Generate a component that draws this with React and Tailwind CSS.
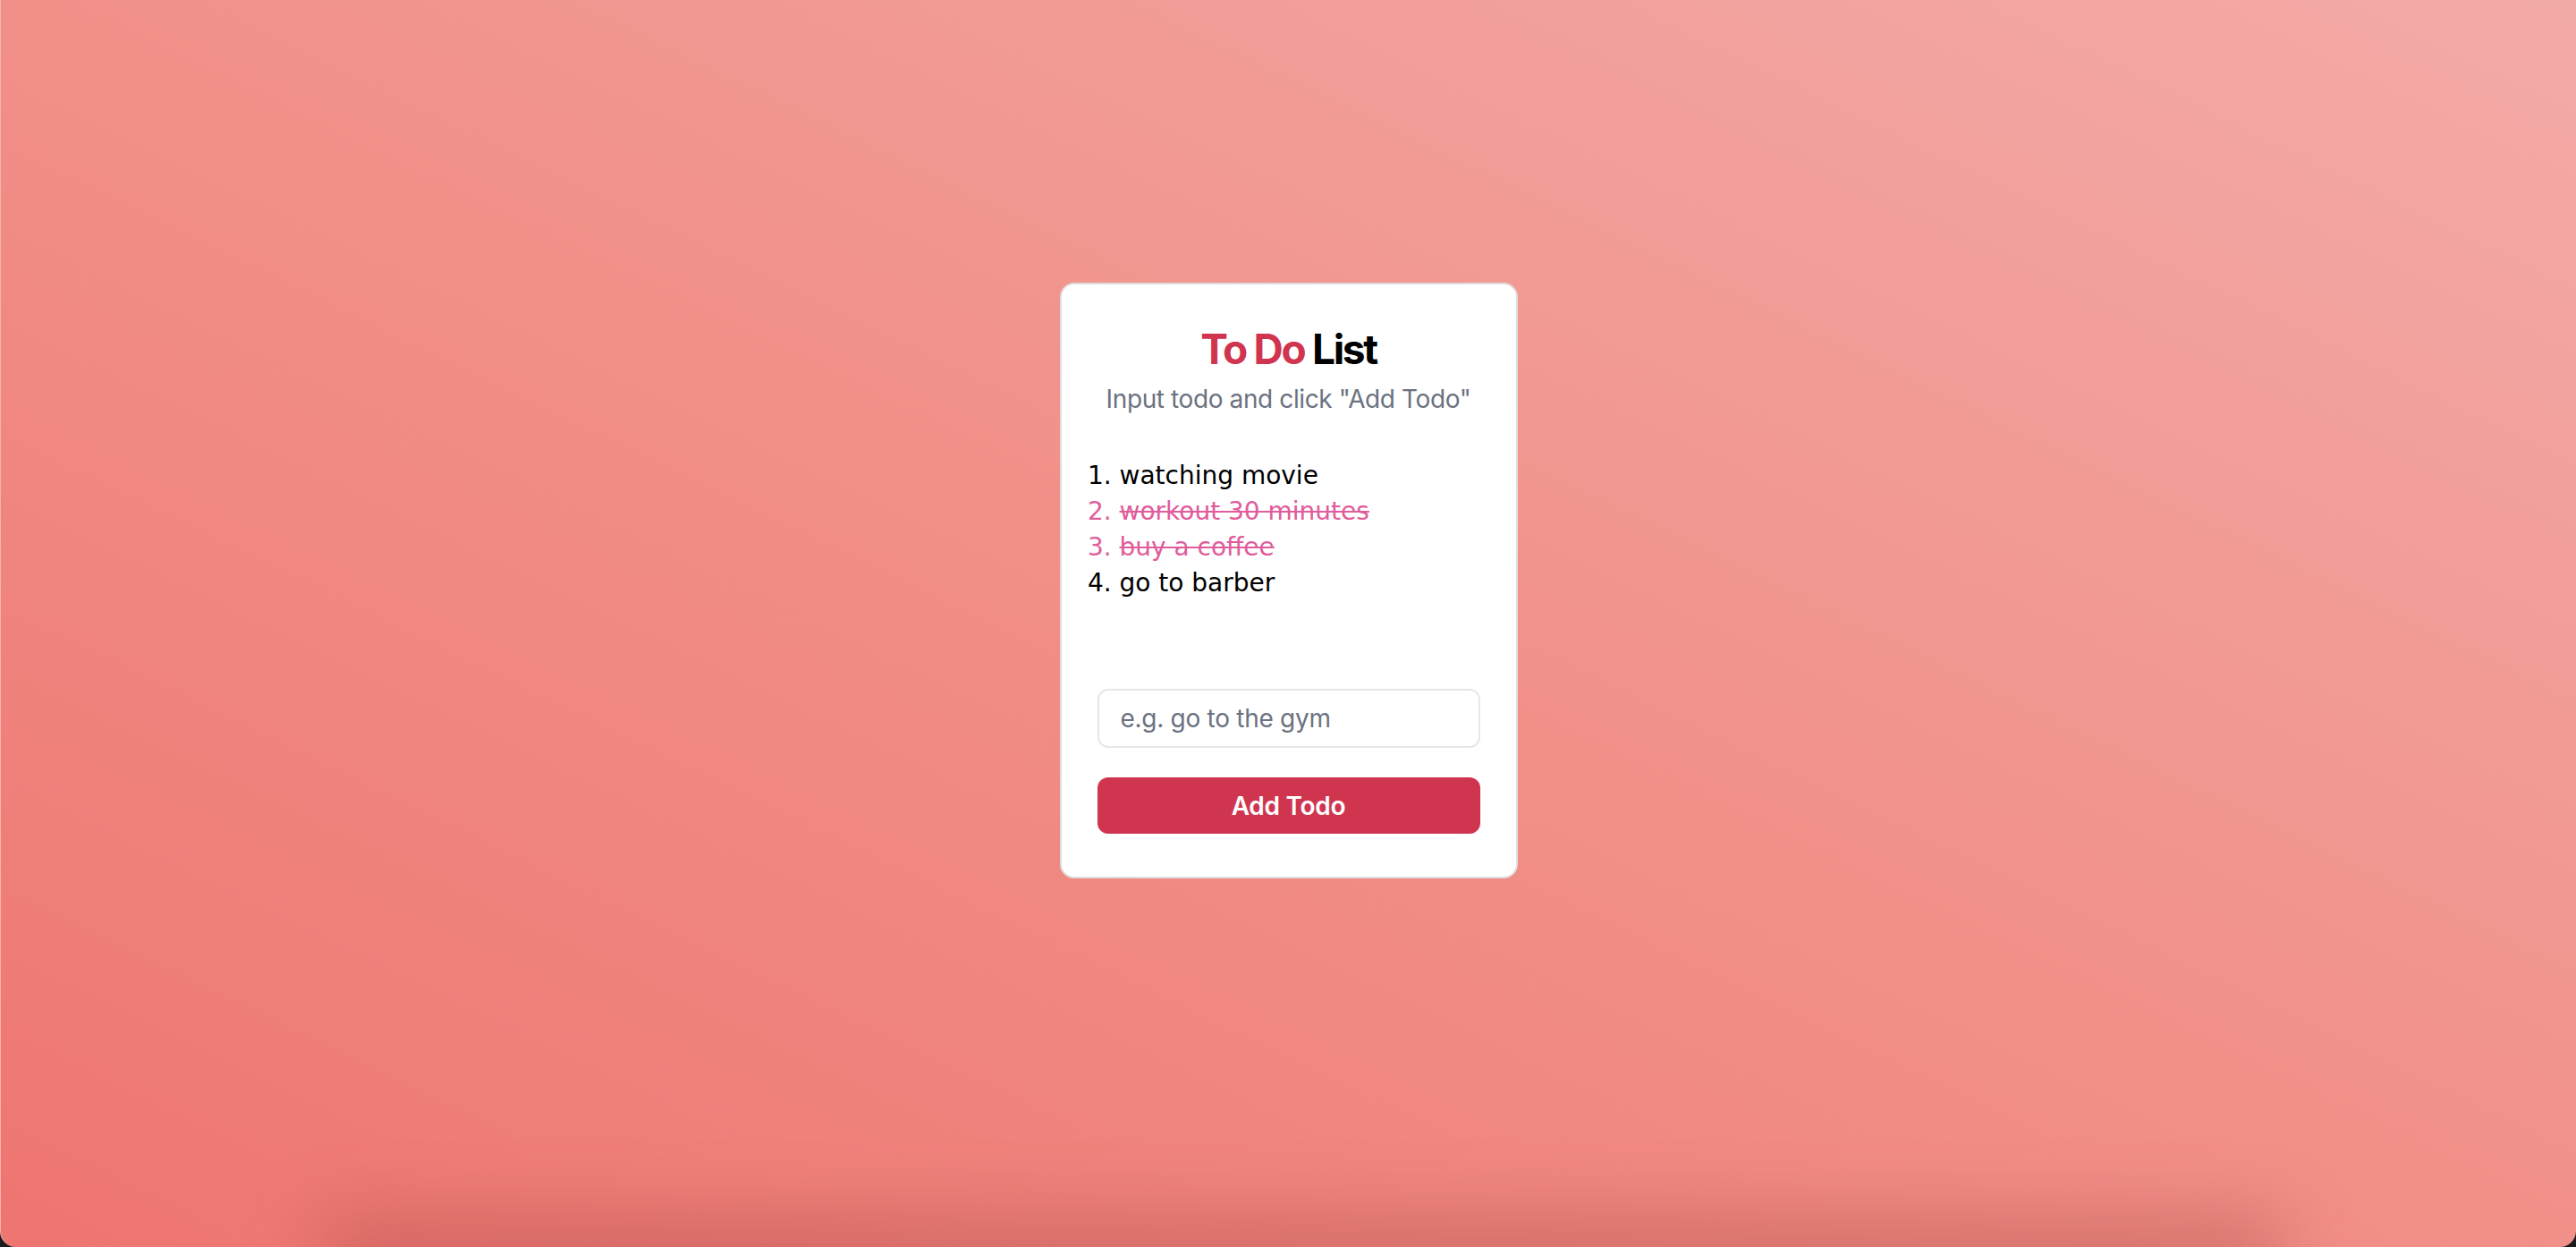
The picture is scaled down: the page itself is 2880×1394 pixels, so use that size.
import { useState } from 'react'

const INITIAL_TODOS = [
  { text: 'watching movie', done: false },
  { text: 'workout 30 minutes', done: true },
  { text: 'buy a coffee', done: true },
  { text: 'go to barber', done: false },
]

export default function App() {
  const [todos, setTodos] = useState(INITIAL_TODOS)
  const [input, setInput] = useState('')

  const addTodo = () => {
    const text = input.trim()
    if (!text) return
    setTodos((prev) => [...prev, { text, done: false }])
    setInput('')
  }

  const toggle = (i) => {
    setTodos((prev) => prev.map((t, idx) => (idx === i ? { ...t, done: !t.done } : t)))
  }

  return (
    <div className="h-[1394px] w-full bg-[#1c1c1e]">
      <div className="relative h-full w-full overflow-hidden rounded-b-[18px] border-l border-[#f6b3b0] bg-gradient-to-tr from-[#ee7571] via-[#f19089] to-[#f3aba8]">
        {/* bottom shadow */}
        <div className="absolute bottom-[-40px] left-[360px] right-[330px] h-[70px] bg-[#a0403c]/40 blur-2xl" />

        <div className="relative flex justify-center pt-[316px] font-['Inter',sans-serif]">
          <div className="flex w-[512px] flex-col rounded-[16px] border-2 border-[#dedede] bg-white px-[40px] pt-[40px] pb-[48px]">
            {/* Header */}
            <h1 className="text-center text-[46px] font-bold leading-[64px] tracking-[-0.05em] text-black">
              <span className="text-[#d1344f]">To Do</span> List
            </h1>
            <p className="mt-[4px] text-center text-[28px] leading-[40px] tracking-[-0.014em] text-[#6b7280]">
              Input todo and click "Add Todo"
            </p>

            {/* Todos */}
            <ol className="mt-[46px] list-decimal pl-[25px] font-['DejaVu_Sans',sans-serif] text-[28px] leading-[40px]">
              {todos.map((t, i) => (
                <li
                  key={i}
                  onClick={() => toggle(i)}
                  className={`cursor-pointer ${t.done ? 'text-[#df5d9c]' : 'text-black'}`}
                >
                  <span className={t.done ? 'line-through' : ''}>{t.text}</span>
                </li>
              ))}
            </ol>

            {/* Input */}
            <input
              value={input}
              onChange={(e) => setInput(e.target.value)}
              onKeyDown={(e) => e.key === 'Enter' && addTodo()}
              placeholder="e.g. go to the gym"
              className="mt-[98px] h-[66px] w-full rounded-[12px] border-2 border-[#e5e7eb] px-[24px] text-[28px] tracking-[-0.01em] text-black outline-none placeholder:text-[#6b7280]"
            />
            <button
              onClick={addTodo}
              className="mt-[33px] h-[63px] w-full rounded-[12px] bg-[#d0354f] text-[28px] font-semibold tracking-[-0.01em] text-white"
            >
              Add Todo
            </button>
          </div>
        </div>
      </div>
    </div>
  )
}
